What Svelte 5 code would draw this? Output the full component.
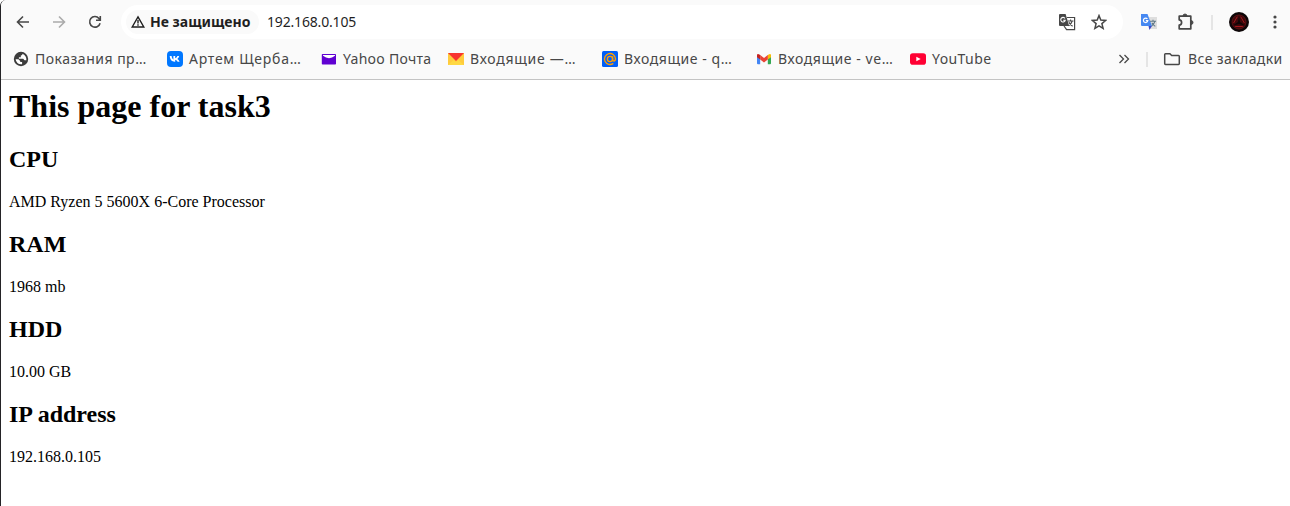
<script>
  const bookmarks = [
    { icon: 'globe', label: 'Показания пр…', slot: 154, track: 0.5 },
    { icon: 'vk', label: 'Артем Щерба…', slot: 154, track: 0.74 },
    { icon: 'yahoo', label: 'Yahoo Почта', slot: 127, track: 0.28 },
    { icon: 'yandex', label: 'Входящие —…', slot: 154, track: 0.74 },
    { icon: 'mailru', label: 'Входящие - q…', slot: 154, track: 0.56 },
    { icon: 'gmail', label: 'Входящие - ve…', slot: 154, track: 0.56 },
    { icon: 'youtube', label: 'YouTube', slot: 90, track: 0.42 }
  ];
  const facts = [
    ['CPU', 'AMD Ryzen 5 5600X 6-Core Processor'],
    ['RAM', '1968 mb'],
    ['HDD', '10.00 GB'],
    ['IP address', '192.168.0.105']
  ];
</script>

<div class="window">
  <header>
    <div class="toolbar">
      <nav>
        <svg width="16" height="16" viewBox="0 0 16 16" class="line"><path d="M14 8H3M8 2.5 2.5 8 8 13.5" /></svg>
        <svg width="16" height="16" viewBox="0 0 16 16" class="line off"><path d="M2 8h11M8 2.5 13.5 8 8 13.5" /></svg>
        <svg width="16" height="16" viewBox="0 0 16 16" class="line"><path d="M13.1 9.2A5.3 5.3 0 1 1 12 4.4l1.2 1.5M13.3 2v4.3H9" /></svg>
      </nav>
      <div class="omnibox">
        <div class="chip">
          <svg width="14" height="14" viewBox="0 0 14 14"><path d="M7 1.9 12.8 12H1.2Z" fill="none" stroke="#1f1f1f" stroke-width="1.4" /><path d="M6.3 5h1.4v3.5H6.3zM6.3 9.3h1.4v1.4H6.3z" fill="#1f1f1f" /></svg>
          <b>Не защищено</b>
        </div>
        <span class="url">192.168.0.105</span>
        <div class="actions">
          <svg width="18" height="18" viewBox="0 0 18 18">
            <path d="M9 4.5h7.6v12.2H8.6L6 13" fill="#fff" stroke="#474747" stroke-width="1.2" />
            <path d="M2 1h5.6l3.6 12H2a1 1 0 0 1-1-1V2a1 1 0 0 1 1-1Z" fill="#474747" />
            <path d="M7 5.4A2.3 2.3 0 1 0 7.3 7.2H5.2" fill="none" stroke="#fff" stroke-width="1.1" />
            <path d="M9.8 8h5.7M12.6 6.5V8M14.2 8q-.8 3-3.6 4.7M11 9.3q1.2 2.4 3.6 4" fill="none" stroke="#474747" stroke-width="1.1" />
          </svg>
          <svg width="16" height="16" viewBox="0 0 16 16"><path d="m8 1.6 1.8 4.5 4.8.4-3.7 3.1 1.2 4.7L8 11.8l-4.1 2.5 1.2-4.7-3.7-3.1 4.8-.4Z" fill="none" stroke="#474747" stroke-width="1.5" /></svg>
        </div>
      </div>
      <div class="extensions">
        <svg class="translate" width="16" height="16" viewBox="0 0 16 16">
          <path d="M7 3h9v12H9Z" fill="#dedede" />
          <path d="M0 0h6.5L11 12H1a1 1 0 0 1-1-1Z" fill="#4688f1" /><path d="M7.5 12H11l-2.6 4Z" fill="#3b49c7" />
          <path d="M6.4 5A2.2 2.2 0 1 0 6.8 6.7H4.8" fill="none" stroke="#fff" stroke-width="1.2" />
          <path d="M9 7.2h6M12 5.8v1.4M14 7.2q-.8 2.8-3.2 4.5M10.8 8.7q1.4 2.3 3.5 3.7" fill="none" stroke="#607988" stroke-width="1.1" />
        </svg>
        <svg class="puzzle" width="18" height="18" viewBox="0 0 18 18"><path d="M2.2 3.2h11.6v12.6H2.2v-3.7q2.4-.2 2.4-2.6T2.2 6.9Z" fill="none" stroke="#474747" stroke-width="1.7" stroke-linejoin="round" /><path d="M6 3a2 2 0 0 1 4 0ZM14 7.5a2 2 0 0 1 0 4Z" fill="#474747" stroke="#474747" stroke-width=".9" /></svg>
        <i class="divider"></i>
        <svg class="avatar" width="20" height="20" viewBox="0 0 20 20"><circle cx="10" cy="10" r="10" fill="#0d0607" /><circle cx="10" cy="10" r="7" fill="#3d080b" stroke="#6c1014" stroke-width=".8" /><path d="m10 4 1 6 5 3.5-6-1.5-6 1.5L9 10Z" fill="#0d0607" /><path d="M8.3 4.7 4.6 11M11.7 4.7l3.7 6.3M6.2 14.5h7.6" fill="none" stroke="#a3181d" stroke-width="1" /></svg>
        <svg class="menu" width="6" height="16" viewBox="0 0 6 16" fill="#474747"><circle cx="3" cy="3" r="1.6" /><circle cx="3" cy="8" r="1.6" /><circle cx="3" cy="13" r="1.6" /></svg>
      </div>
    </div>

    <div class="bookmarks">
      {#each bookmarks as item}
        <div class="bookmark" style="width: {item.slot}px">
          <svg width="16" height="16" viewBox="0 0 16 16">
            {#if item.icon === 'globe'}
              <circle cx="8" cy="8" r="7.2" fill="#3c3c3c" /><path d="M2.6 8.2h2.9l1.7 1.7v1.2h1.9v2.1q-5.5.6-6.5-5ZM9.3 2.8v1.1l-1.5.7v1.6H5.9v1.6h4.3l1.3 1.4h1.9q.2-4.6-4.1-6.4Z" fill="#fff" />
            {:else if item.icon === 'vk'}
              <rect width="16" height="16" rx="4" fill="#07f" /><path d="M2.7 5h1.9q.1 3 1.8 3.8V5h1.8v2.3Q9.7 7 10.4 5h1.8q-.5 2-1.9 2.9 1.5.8 2.3 2.8h-2Q10 9.2 8.2 8.7v2h-.5Q3 10.7 2.7 5Z" fill="#fff" />
            {:else if item.icon === 'yahoo'}
              <rect x=".8" y="3" width="14.2" height="10.5" rx=".8" fill="#6001d2" /><path d="M2 4h12v.8Q8 9.6 2 4.8Z" fill="#fff" />
            {:else if item.icon === 'yandex'}
              <path d="M0 2h16v12H0Z" fill="#ffcb3d" /><path d="m0 14 5.6-5L8 11l2.4-2 5.6 5Z" fill="#ffd943" /><path d="M0 2h16L8 10Z" fill="#f8332f" />
            {:else if item.icon === 'mailru'}
              <rect width="16" height="16" rx="1.5" fill="#005ff9" /><circle cx="8" cy="8" r="2.6" fill="none" stroke="#ff9e00" stroke-width="1.4" /><path d="M10.6 5.2v3.5q.2 1.6 1.6 1.3 1.3-.4 1.3-2A5.5 5.5 0 1 0 11.3 12.4" fill="none" stroke="#ff9e00" stroke-width="1.4" />
            {:else if item.icon === 'gmail'}
              <path d="M1 4h3.2v9.2H2a1 1 0 0 1-1-1Z" fill="#4285f4" /><path d="M11.8 4H15v8.2a1 1 0 0 1-1 1h-2.2Z" fill="#34a853" /><path d="M11.8 4q3.2-2.3 3.2.4v1.8l-3.2 2.4Z" fill="#fbbc04" /><path d="M1 4.4Q1 1.7 4.2 4v4.6L1 6.2Z" fill="#c5221f" /><path d="m4.2 4 3.8 2.9L11.8 4v4.6L8 11.5 4.2 8.6Z" fill="#ea4335" />
            {:else}
              <rect y="2.3" width="16" height="11.4" rx="2.8" fill="#ff0033" /><path d="m6.3 5.7 4.4 2.3-4.4 2.3Z" fill="#fff" />
            {/if}
          </svg>
          <span style="letter-spacing: {item.track}px">{item.label}</span>
        </div>
      {/each}
      <div class="overflow">
        <svg width="12" height="12" viewBox="0 0 12 12"><path d="m1.5 2 4 4-4 4M6.5 2l4 4-4 4" fill="none" stroke="#474747" stroke-width="1.3" /></svg>
        <i class="divider"></i>
        <svg class="folder" width="18" height="16" viewBox="0 0 18 16"><path d="M1.7 12.6V3.5q0-.8.8-.8h4.4l1.8 1.8h6.8q.8 0 .8.8v7.3q0 .8-.8.8h-13q-.8 0-.8-.8Z" fill="none" stroke="#474747" stroke-width="1.5" /></svg>
        <span class="all">Все закладки</span>
      </div>
    </div>
  </header>

  <main>
    <h1>This page for task3</h1>
    {#each facts as [name, value]}
      <h2>{name}</h2>
      <p>{value}</p>
    {/each}
  </main>
</div>

<style>
  :global(body) { margin: 0; background: #fff; overflow: hidden; }
  .window { box-sizing: border-box; height: 506px; border-left: 1px solid #242326; border-top-left-radius: 6px; background: #fff; overflow: hidden; }
  header { box-sizing: border-box; height: 80px; background: #fafafa; border-bottom: 1px solid #c4c4c4; font: 14px/20px "Noto Sans", sans-serif; color: #474747; white-space: nowrap; }
  svg { display: block; flex: none; }
  .toolbar { display: flex; align-items: center; height: 44px; }
  nav { display: flex; gap: 20px; width: 106px; padding-left: 14px; }
  .line { fill: none; stroke: #474747; stroke-width: 1.6; }
  .off { stroke: #ababab; }
  .omnibox { box-sizing: border-box; display: flex; align-items: center; width: 1002px; height: 34px; padding: 0 16px 0 5px; border-radius: 17px; background: #fff; color: #1f1f1f; }
  .chip { box-sizing: border-box; display: flex; align-items: center; gap: 5px; width: 133px; height: 24px; padding-left: 5px; border-radius: 12px; background: #fafafa; }
  .url { margin-left: 8px; letter-spacing: -0.17px; }
  .actions { display: flex; align-items: center; gap: 15px; margin-left: auto; }
  .extensions { display: flex; align-items: center; }
  .translate { margin-left: 18px; }
  .puzzle { margin-left: 20px; }
  .divider { width: 2px; height: 15px; background: #e5e5e5; }
  .extensions .divider { margin-left: 16px; }
  .avatar { margin-left: 16px; }
  .menu { margin-left: 23px; }
  .bookmarks { display: flex; align-items: center; height: 30px; padding-left: 12px; }
  .bookmark { display: flex; align-items: center; gap: 6px; flex: none; }
  .overflow { display: flex; align-items: center; margin-left: 118px; }
  .overflow .divider { margin-left: 16px; }
  .folder { margin-left: 15px; }
  .all { margin-left: 7px; letter-spacing: 0.4px; }
  main { padding: 8px; color: #000; font: 16px/18px "Liberation Serif", serif; }
  h1 { margin: 0 0 21.44px; font-size: 32px; line-height: 37px; }
  h2 { margin: 19.92px 0; font-size: 24px; line-height: 27px; }
  p { margin: 0; }
</style>
